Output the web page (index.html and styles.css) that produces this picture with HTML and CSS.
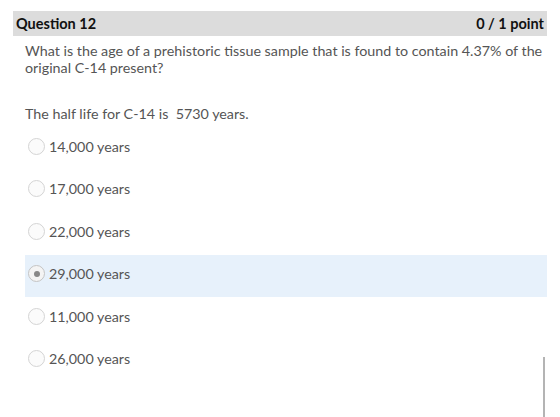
FILE: index.html
```html
<html lang="en">
<head>
     <meta charset="UTF-8">
     <title>Question 12</title>
     <link rel="stylesheet" href="styles.css">
</head>
<body>
     <div id="quiz">
          <div class="q-head">
               <span>Question 12</span>
               <span>0 / 1 point</span>
          </div>
          <div class="q-body">
               <p class="q-text">What is the age of a prehistoric tissue sample that is found to contain 4.37% of the original C-14 present?</p>
               <p class="q-text half">The half life for C-14 is&nbsp; 5730 years.</p>
          </div>
          <ul class="choices">
               <li><span class="radio"></span>14,000 years</li>
               <li><span class="radio"></span>17,000 years</li>
               <li><span class="radio"></span>22,000 years</li>
               <li class="picked"><span class="radio"></span>29,000 years</li>
               <li><span class="radio"></span>11,000 years</li>
               <li><span class="radio"></span>26,000 years</li>
          </ul>
     </div>
     <div class="scroll"></div>
</body>
</html>
```

FILE: styles.css
```css
body{
     margin: 0px;
     font-family: Lato, "Open Sans", sans-serif;
     background: #FFF;
     color: #555;
}
#quiz{
     padding: 11px 13px 0 13px;
}
.q-head{
     display: flex;
     justify-content: space-between;
     background: #dcdcdc;
     color: #111;
     font-weight: bold;
     font-size: 14.5px;
     height: 25px;
     line-height: 25px;
     padding: 0 3px;
}
.q-body{
     padding: 0 0 0 12px;
}
.q-text{
     margin: 6px 0 0 0;
     font-size: 14.3px;
     line-height: 17px;
}
.q-text.half{
     margin-top: 29px;
}
.choices{
     margin: 5px 0 0 12px;
     padding: 0px;
     list-style: none;
}
.choices li{
     display: flex;
     align-items: center;
     height: 42.5px;
     font-size: 14.3px;
     padding-left: 3px;
     padding-bottom: 4px;
     box-sizing: border-box;
}
.choices li.picked{
     background: #e7f1fb;
}
.radio{
     width: 17px;
     height: 17px;
     border: 1px solid #d4d4d4;
     border-radius: 50%;
     background: #fbfbfb;
     margin-right: 4px;
     position: relative;
     box-sizing: border-box;
}
.picked .radio{
     border-color: #c4c4c4;
     background: #f4f4f4;
}
.picked .radio:after{
     content: "";
     position: absolute;
     left: 4.5px;
     top: 4.5px;
     width: 6px;
     height: 6px;
     border-radius: 50%;
     background: #888;
}
.scroll{
     position: absolute;
     left: 543px;
     top: 357px;
     width: 2px;
     height: 60px;
     background: #b4b4b4;
}
```
